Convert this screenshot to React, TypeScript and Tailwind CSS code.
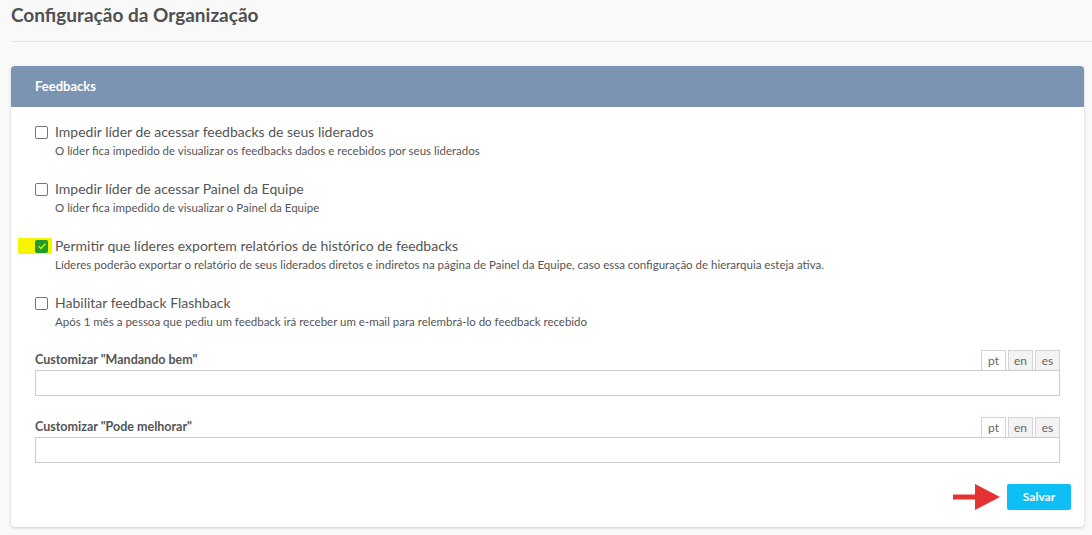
import { useState } from "react";

const options = [
  {
    label: "Impedir líder de acessar feedbacks de seus liderados",
    desc: "O líder fica impedido de visualizar os feedbacks dados e recebidos por seus liderados",
    checked: false,
  },
  {
    label: "Impedir líder de acessar Painel da Equipe",
    desc: "O líder fica impedido de visualizar o Painel da Equipe",
    checked: false,
  },
  {
    label: "Permitir que líderes exportem relatórios de histórico de feedbacks",
    desc: "Líderes poderão exportar o relatório de seus liderados diretos e indiretos na página de Painel da Equipe, caso essa configuração de hierarquia esteja ativa.",
    checked: true,
    highlight: true,
  },
  {
    label: "Habilitar feedback Flashback",
    desc: "Após 1 mês a pessoa que pediu um feedback irá receber um e-mail para relembrá-lo do feedback recebido",
    checked: false,
  },
];

const customFields = ['Customizar "Mandando bem"', 'Customizar "Pode melhorar"'];

function LangTabs() {
  const [active, setActive] = useState("pt");
  return (
    <div className="flex gap-[2px]">
      {["pt", "en", "es"].map((l) => (
        <button
          key={l}
          onClick={() => setActive(l)}
          className={
            "h-[20px] w-[25px] border border-b-0 border-[#d4d4d4] text-[12px] leading-none text-[#666] " +
            (active === l ? "bg-white" : "bg-[#f3f3f3]")
          }
        >
          {l}
        </button>
      ))}
    </div>
  );
}

export default function App() {
  const [checks, setChecks] = useState(options.map((o) => o.checked));

  return (
    <div
      className="min-h-[535px] bg-[#f9f9f9] pl-[11px] pr-[8px] text-[#555]"
      style={{ fontFamily: "Lato, 'Liberation Sans', sans-serif" }}
    >
      <div className="mr-[-8px] border-b border-[#e3e3e3] pt-[2px] pb-[13px]">
        <h1 className="text-[19px] font-bold leading-[26px] text-[#505050]">
          Configuração da Organização
        </h1>
      </div>

      <div className="mt-[24px] overflow-hidden rounded-[4px] bg-white shadow-[0_1px_3px_rgba(0,0,0,0.18)]">
        <div className="flex h-[41px] items-center bg-[#7b94b2] px-[24px]">
          <span className="text-[13px] font-bold text-white">Feedbacks</span>
        </div>

        <div className="px-[24px] pt-[15px]">
          {options.map((o, i) => (
            <div key={i} className="mb-[20px]">
              <label className="relative flex cursor-pointer items-center gap-[7px]">
                {o.highlight && (
                  <span className="absolute left-[-17px] top-[2px] h-[16px] w-[34px] bg-[#f5f500]" />
                )}
                <span
                  onClick={() =>
                    setChecks((c) => c.map((v, j) => (j === i ? !v : v)))
                  }
                  className={
                    "relative flex h-[13px] w-[13px] items-center justify-center rounded-[2px] " +
                    (checks[i]
                      ? "bg-[#249b2c]"
                      : "border border-[#767676] bg-white")
                  }
                >
                  {checks[i] && (
                    <svg viewBox="0 0 12 12" className="h-[10px] w-[10px]">
                      <path
                        d="M2 6.2 L4.8 9 L10 3.2"
                        fill="none"
                        stroke="#c9f400"
                        strokeWidth="1.8"
                      />
                    </svg>
                  )}
                </span>
                <span className="text-[14px] leading-[20px] text-[#555]">
                  {o.label}
                </span>
              </label>
              <p className="mt-[1px] pl-[20px] text-[11.5px] leading-[16px] text-[#555]">
                {o.desc}
              </p>
            </div>
          ))}

          {customFields.map((f) => (
            <div key={f} className="mb-[21px]">
              <div className="flex items-center justify-between">
                <span className="text-[12.5px] font-bold text-[#555]">{f}</span>
                <LangTabs />
              </div>
              <input
                type="text"
                className="block h-[26px] w-full border border-[#ccc] px-2 text-[13px] outline-none"
              />
            </div>
          ))}
        </div>

        <div className="flex items-center justify-end gap-[7px] pr-[13px] pb-[17px]">
          <svg width="47" height="26" viewBox="0 0 47 26">
            <rect x="0" y="10.5" width="24" height="5" fill="#e53232" />
            <polygon points="22,0 47,13 22,26" fill="#e53232" />
          </svg>
          <button className="h-[26px] w-[64px] rounded-[2px] bg-[#0dbff5] text-[12px] font-bold text-white">
            Salvar
          </button>
        </div>
      </div>
    </div>
  );
}
